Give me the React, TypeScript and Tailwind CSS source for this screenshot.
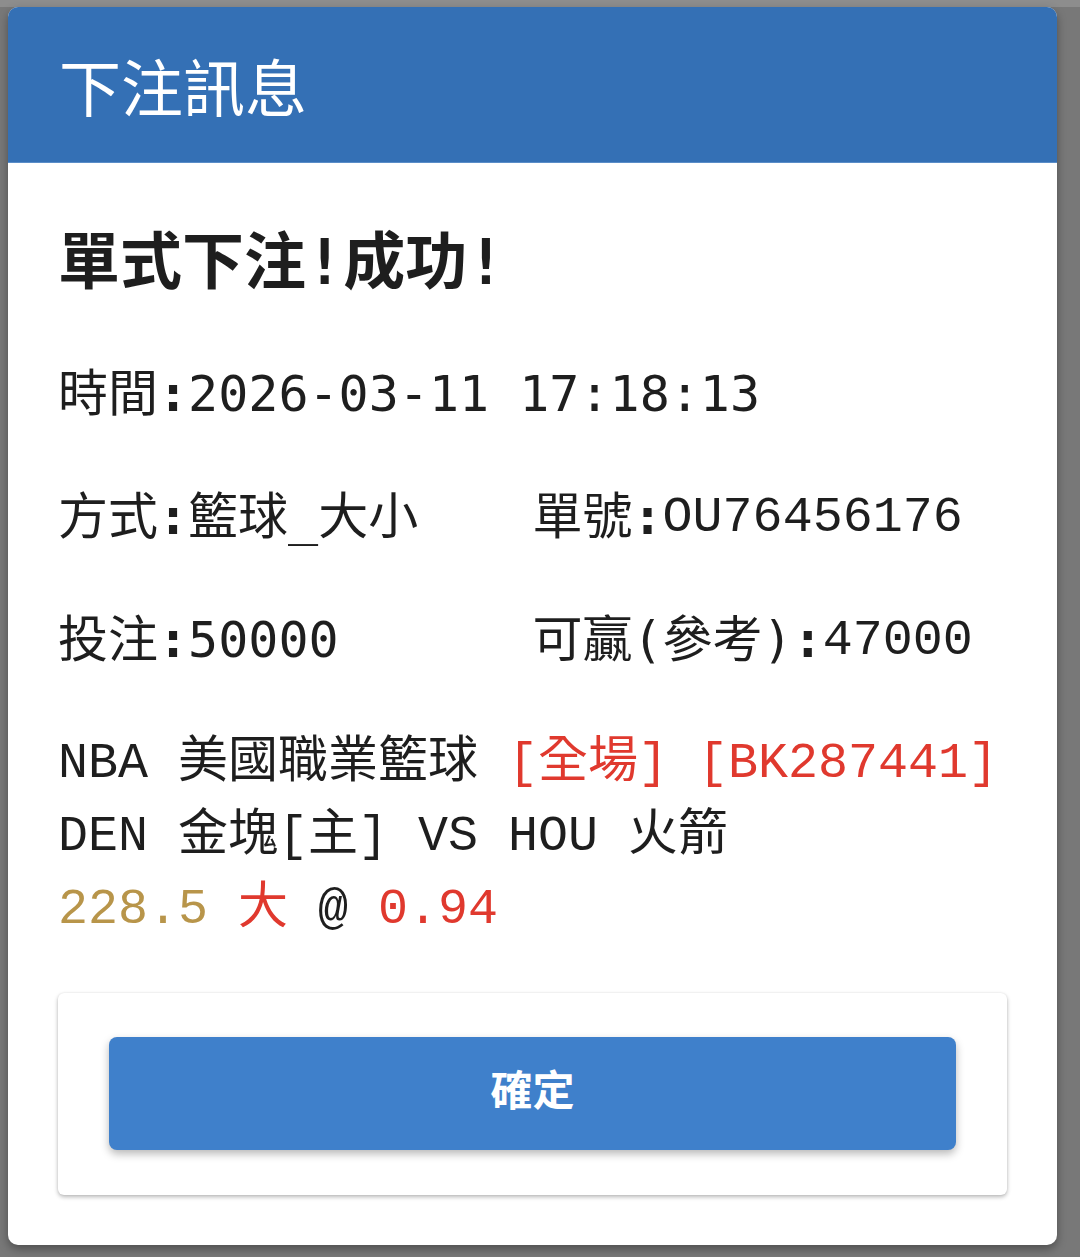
import React from "react";

const SANS_MONO = "font-['DejaVu_Sans_Mono','Noto_Sans_CJK_TC',monospace]";
const SERIF_MONO = "font-['Liberation_Mono','Noto_Sans_CJK_TC',monospace]";

function Colon() {
  return <span className="font-bold">:</span>;
}

export default function App() {
  return (
    <div className="w-[1080px] h-[1257px] bg-[#787878] flex flex-col overflow-hidden">
      <div className="h-[7px] w-full bg-[#8d8d8d] shrink-0" />
      <div className="pl-[8px]">
        <div className="w-[1049px] h-[1238px] bg-white rounded-[10px] overflow-hidden shadow-[0_4px_10px_rgba(0,0,0,0.35)] flex flex-col">
          <div className="h-[156px] bg-[#3470b5] flex items-center pl-[51px] shrink-0 border-b border-[#5a8dc8]">
            <span className="text-white text-[62px] leading-none font-['Noto_Sans_CJK_TC',sans-serif] font-normal">
              下注訊息
            </span>
          </div>
          <div className="px-[50px] pt-[63px] text-[#1e1e1e] flex flex-col">
            <div className={`h-[73px] flex items-center text-[62px] font-bold whitespace-pre ${SANS_MONO}`}>
              單式下注!成功!
            </div>
            <div className="mt-[59px] flex flex-col gap-[50px] text-[50px]">
              <div className={`h-[73px] flex items-center whitespace-pre ${SANS_MONO}`}>
                <span>時間</span>
                <Colon />
                <span>2026-03-11 17:18:13</span>
              </div>
              <div className="grid grid-cols-2">
                <div className={`h-[73px] flex items-center whitespace-pre ${SANS_MONO}`}>
                  <span>方式</span>
                  <Colon />
                  <span>籃球_大小</span>
                </div>
                <div className="h-[73px] flex items-center whitespace-pre">
                  <span className={SANS_MONO}>單號</span>
                  <span className={SANS_MONO}>
                    <Colon />
                  </span>
                  <span className={SERIF_MONO}>OU76456176</span>
                </div>
              </div>
              <div className="grid grid-cols-2">
                <div className={`h-[73px] flex items-center whitespace-pre ${SANS_MONO}`}>
                  <span>投注</span>
                  <Colon />
                  <span>50000</span>
                </div>
                <div className="h-[73px] flex items-center whitespace-pre">
                  <span className={SANS_MONO}>可贏(參考)</span>
                  <span className={SANS_MONO}>
                    <Colon />
                  </span>
                  <span className={SERIF_MONO}>47000</span>
                </div>
              </div>
              <div className={`flex flex-col whitespace-pre ${SERIF_MONO}`}>
                <div className="h-[73px] flex items-center">
                  <span>NBA 美國職業籃球 </span>
                  <span className="text-[#e0392e]">[全場] [BK287441]</span>
                </div>
                <div className="h-[73px] flex items-center">
                  <span>DEN 金塊[主] VS HOU 火箭</span>
                </div>
                <div className="h-[73px] flex items-center">
                  <span className="text-[#b8954a]">228.5 </span>
                  <span className="text-[#e0392e]">大 </span>
                  <span>@ </span>
                  <span className="text-[#e0392e]">0.94</span>
                </div>
              </div>
            </div>
            <div className="mt-[47px] h-[202px] bg-white rounded-[6px] shadow-[0_2px_4px_rgba(0,0,0,0.28),0_0_2px_rgba(0,0,0,0.08)] px-[51px] pt-[44px]">
              <button className="w-full h-[113px] rounded-[8px] bg-[#3f80cb] shadow-[0_4px_8px_rgba(0,0,0,0.28)] flex items-center justify-center pb-[12px]">
                <span className="text-white text-[42px] font-bold font-['Noto_Sans_CJK_TC',sans-serif] leading-none">
                  確定
                </span>
              </button>
            </div>
          </div>
        </div>
      </div>
    </div>
  );
}
